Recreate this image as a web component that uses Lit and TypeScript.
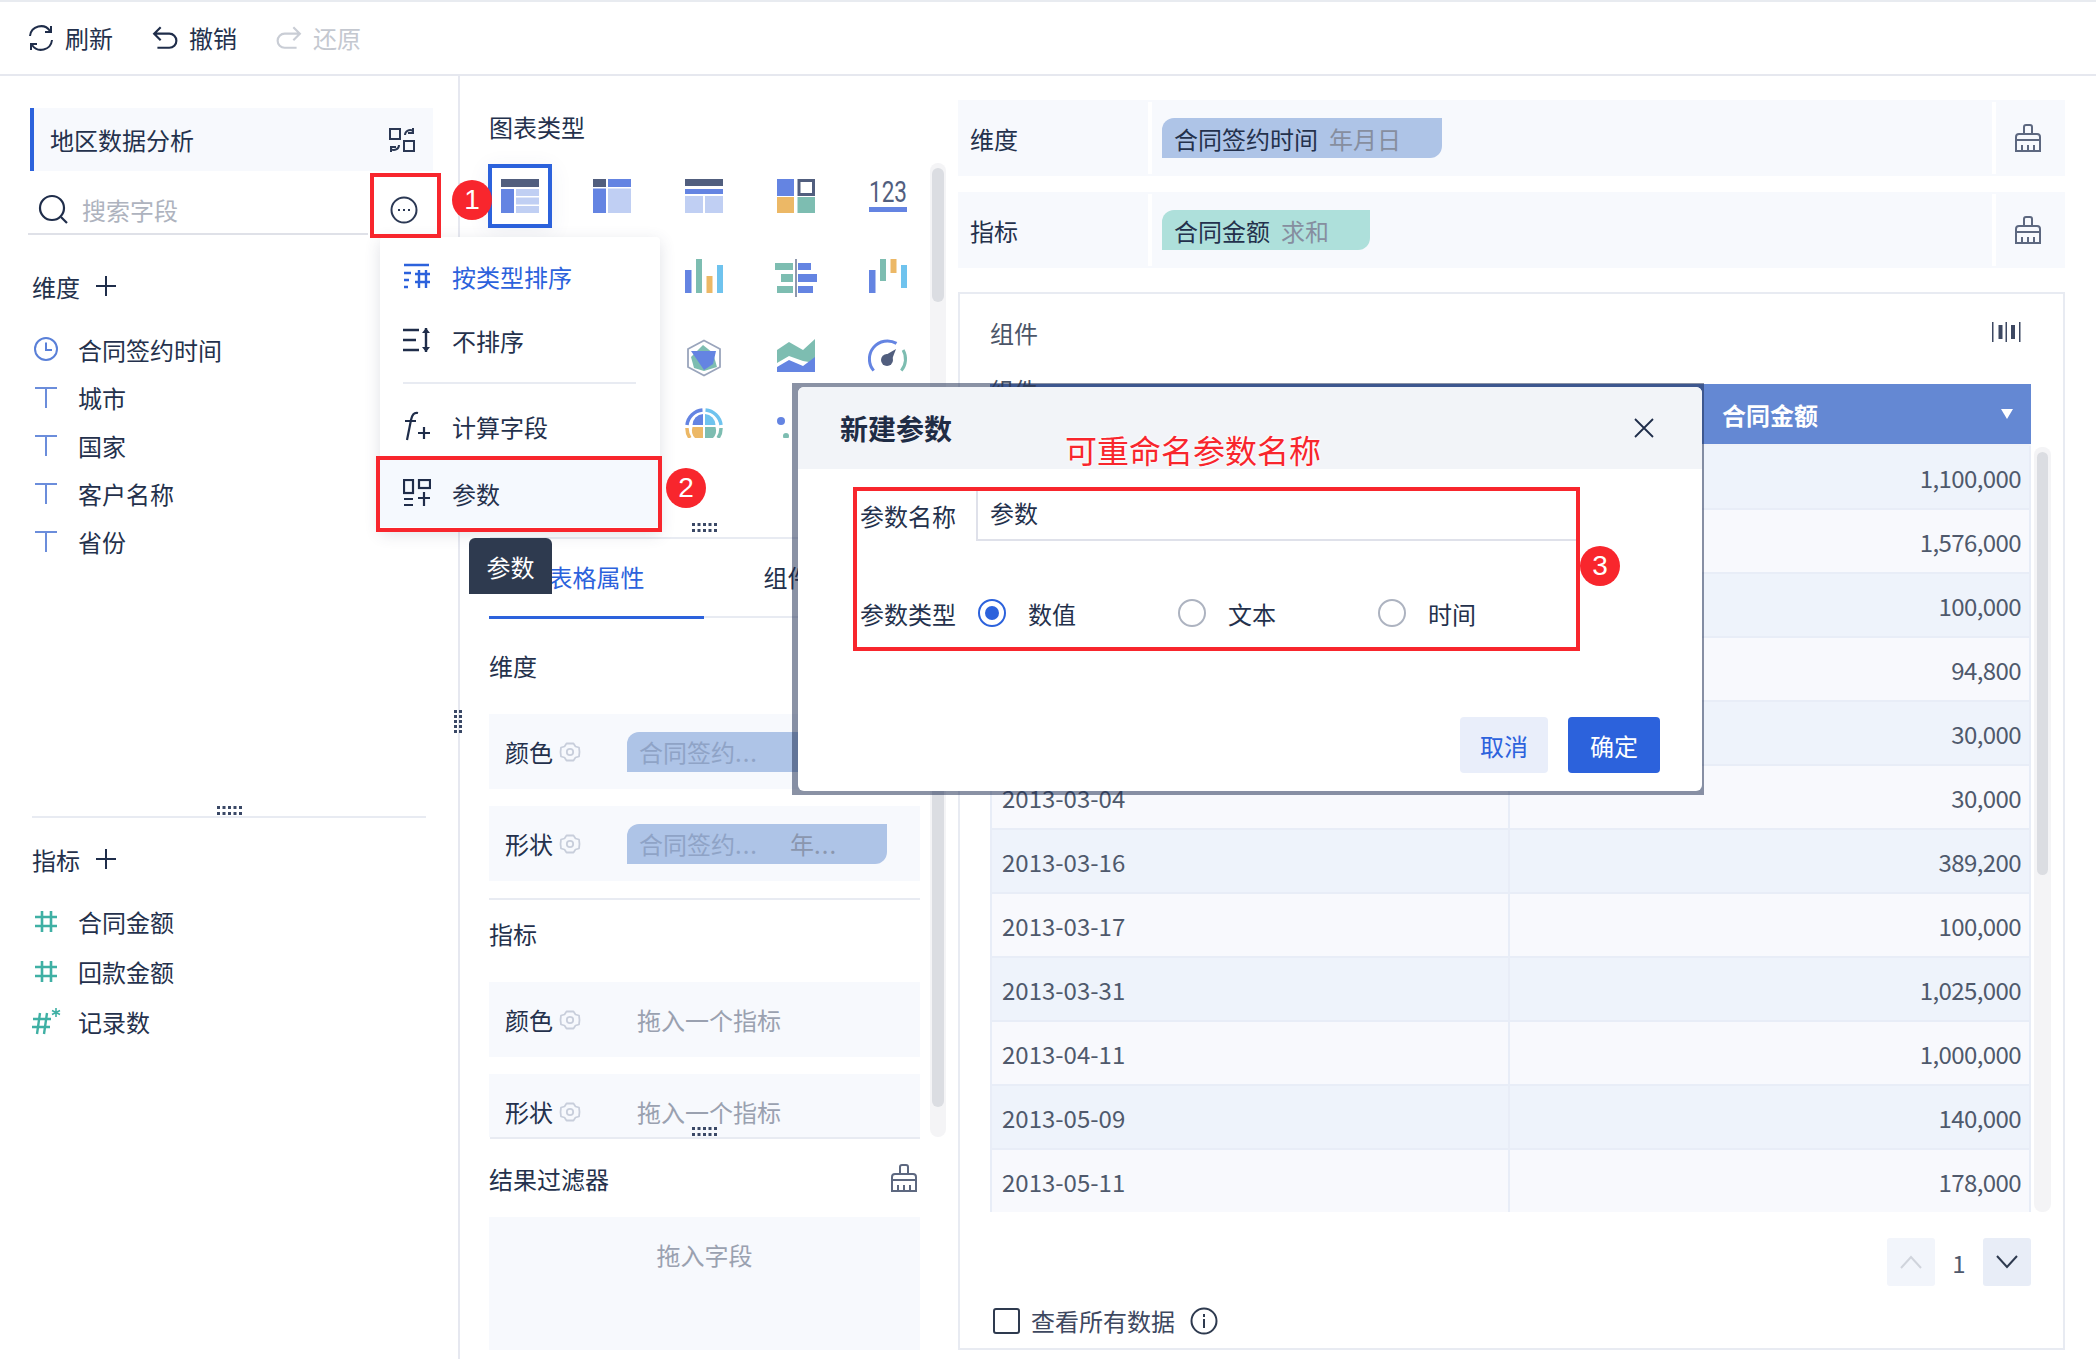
import { LitElement, html, css } from "lit";
import { customElement } from "lit/decorators.js";

const dark = "#515e7e", blue = "#6484e2", light = "#c0cff3", teal = "#7dbdb1", orange = "#ecb866", sky = "#6fc3ee";

const dotsH = html`<svg class="dots-h" width="26" height="10" viewBox="0 0 26 10" fill="#3a4866">
  <path d="M0 0h3v3H0zM5.500 0h3v3h-3zM11 0h3v3h-3zM16.500 0h3v3h-3zM22 0h3v3h-3zM0 6h3v3H0zM5.500 6h3v3h-3zM11 6h3v3h-3zM16.500 6h3v3h-3zM22 6h3v3h-3z"/>
</svg>`;

const brush = html`<svg class="brush" width="30" height="30" viewBox="0 0 30 30" fill="none" stroke="#5d6880" stroke-width="2">
  <path d="M11 11V4a2 2 0 0 1 2-2h4a2 2 0 0 1 2 2v7M3 17v-3a3 3 0 0 1 3-3h18a3 3 0 0 1 3 3v3M3 17h24M3 17v11h24V17M9 22v6M15 22v6M21 22v6"/>
</svg>`;

const gear = html`<svg class="gear" width="22" height="22" viewBox="0 0 22 22" fill="none" stroke="#c8cedb" stroke-width="1.800">
  <path d="M7.500 2.500h7l2 3 3.500 1 .5 4.500-.5 4.500-3.500 1-2 3h-7l-2-3-3.500-1L1.500 11 2 6.500l3.500-1z" stroke-linejoin="round"/><circle cx="11" cy="11" r="3.200"/>
</svg>`;

const tIcon = html`<svg width="24" height="24" viewBox="0 0 24 24" fill="none" stroke="#6b8ddb" stroke-width="2"><path d="M1 3h22M12 3v20"/></svg>`;
const clock = html`<svg class="shift" width="26" height="26" viewBox="0 0 26 26" fill="none" stroke="#5a80d8" stroke-width="2"><circle cx="13" cy="13" r="11"/><path d="M13 6.500V14h6"/></svg>`;
const hash = html`<svg width="24" height="24" viewBox="0 0 24 24" fill="none" stroke="#3fb0a4" stroke-width="2.600"><path d="M1 8h22M1 17h22M8 2v21M17 2v21"/></svg>`;
const hashStar = html`<svg class="shift2" width="30" height="28" viewBox="0 0 30 28" fill="none" stroke="#3fb0a4" stroke-width="2.400"><path d="M1 12h18M0 20h18M8 6 5 27M15 6l-3 21"/><path d="M24 1v9M20 3.500l8 4M28 3.500l-8 4" stroke-width="1.600"/></svg>`;

const icons = {
  t1: html`<svg width="38" height="34" viewBox="0 0 38 34"><rect width="38" height="8" fill="${dark}"/><rect y="10" width="13" height="24" fill="${blue}"/><rect x="15" y="10" width="23" height="7" fill="${light}"/><rect x="15" y="18.500" width="23" height="7" fill="${light}"/><rect x="15" y="27" width="23" height="7" fill="${light}"/></svg>`,
  t2: html`<svg width="38" height="34" viewBox="0 0 38 34"><rect width="13" height="8" fill="${dark}"/><rect x="15" width="23" height="8" fill="${blue}"/><rect y="9.500" width="13" height="24.500" fill="${blue}"/><rect x="15" y="9.500" width="23" height="24.500" fill="${light}"/></svg>`,
  t3: html`<svg width="38" height="34" viewBox="0 0 38 34"><rect width="38" height="7" fill="${dark}"/><rect y="10" width="38" height="5" fill="${blue}"/><rect y="17" width="18" height="17" fill="${light}"/><rect x="20" y="17" width="18" height="17" fill="${light}"/></svg>`,
  t4: html`<svg width="38" height="34" viewBox="0 0 38 34"><rect width="17" height="17" fill="${blue}"/><rect x="22" y="1.500" width="14.500" height="14" fill="none" stroke="${dark}" stroke-width="3"/><rect y="18" width="17" height="16" fill="${orange}"/><rect x="20.500" y="18" width="17.500" height="16" fill="${teal}"/></svg>`,
  t5: html`<svg width="38" height="34" viewBox="0 0 38 34"><text class="num" x="0" y="23" textLength="38" lengthAdjust="spacingAndGlyphs" fill="${dark}">123</text><rect y="28" width="38" height="5" fill="${blue}"/></svg>`,
  bar: html`<svg width="38" height="34" viewBox="0 0 38 34"><rect y="11" width="6.500" height="23" fill="${blue}"/><rect x="11" width="6" height="34" fill="${teal}"/><rect x="21.500" y="17" width="6" height="17" fill="${orange}"/><rect x="32" y="6" width="6" height="28" fill="${sky}"/></svg>`,
  comp: html`<svg width="42" height="38" viewBox="0 0 42 38"><rect y="4" width="18" height="7" fill="${teal}"/><rect x="6" y="15" width="12" height="8" fill="${teal}"/><rect x="2" y="27" width="16" height="7" fill="${teal}"/><rect x="20" width="2" height="38" fill="#8e98ad"/><rect x="23" y="4" width="13" height="7" fill="${blue}"/><rect x="23" y="15" width="19" height="8" fill="${blue}"/><rect x="23" y="27" width="15" height="7" fill="${blue}"/></svg>`,
  water: html`<svg width="38" height="34" viewBox="0 0 38 34"><rect y="11" width="6.500" height="23" fill="${blue}"/><rect x="11" width="6" height="22" fill="${teal}"/><rect x="21.500" width="6" height="14" fill="${orange}"/><rect x="32" y="6" width="6" height="23" fill="${sky}"/></svg>`,
  radar: html`<svg width="34" height="38" viewBox="0 0 34 38"><path d="M17 1.500 33 10v18l-16 8.500L1 28V10z" fill="none" stroke="#9aa5bc" stroke-width="1.800"/><path d="M16 6l10 8 4 14-13 4-10-3-3-11z" fill="${teal}"/><path d="M4 12l25 0-3 13-9 6z" fill="${blue}"/></svg>`,
  area: html`<svg width="38" height="33" viewBox="0 0 38 33"><path d="M0 11 12 3l14 8L38 0v24L26 22 12 17 0 24z" fill="${teal}"/><path d="M0 28l12-7 14 6 12-9v15H0z" fill="${blue}"/></svg>`,
  gauge: html`<svg width="40" height="36" viewBox="0 0 40 36" fill="none"><path d="M5.700 31.600A18 18 0 0 1 28.500 4.400" stroke="${blue}" stroke-width="3"/><path d="M35.100 11A18 18 0 0 1 33.300 31.600" stroke="${teal}" stroke-width="3"/><path d="M16 17 28 10 23 23z" fill="${dark}"/><circle cx="19" cy="21" r="6" fill="${dark}"/></svg>`,
  pie: html`<svg width="38" height="30" viewBox="0 0 38 30" fill="none"><path d="M2 17A17 17 0 0 1 17.500 2" stroke="${blue}" stroke-width="3.500"/><path d="M20.500 2A17 17 0 0 1 36 17" stroke="${sky}" stroke-width="3.500"/><path d="M2 20a17 17 0 0 0 3 10" stroke="${orange}" stroke-width="3.500"/><path d="M36 20a17 17 0 0 1-3 10" stroke="${teal}" stroke-width="3.500"/><path d="M18 6v11H7.500A11 11 0 0 1 18 6z" fill="${blue}"/><path d="M20 6a11 11 0 0 1 10.500 11H20z" fill="${sky}"/><path d="M7.500 19H18v11H10a11 11 0 0 1-2.500-11z" fill="${orange}"/><path d="M20 19h10.500A11 11 0 0 1 28 30h-8z" fill="${teal}"/></svg>`,
  scatter: html`<svg width="38" height="30" viewBox="0 0 38 30"><circle cx="4" cy="13" r="4" fill="${blue}"/><circle cx="9" cy="28" r="3" fill="${teal}"/></svg>`,
};

const chartCells = [
  icons.t1, icons.t2, icons.t3, icons.t4, icons.t5,
  null, null, icons.bar, icons.comp, icons.water,
  null, null, icons.radar, icons.area, icons.gauge,
  null, null, icons.pie, icons.scatter, null,
];

const amounts: [string, string][] = [
  ["", "1,100,000"], ["", "1,576,000"], ["", "100,000"], ["", "94,800"], ["", "30,000"],
  ["2013-03-04", "30,000"], ["2013-03-16", "389,200"], ["2013-03-17", "100,000"], ["2013-03-31", "1,025,000"],
  ["2013-04-11", "1,000,000"], ["2013-05-09", "140,000"], ["2013-05-11", "178,000"],
];

const dimFields: [unknown, string][] = [[clock, "合同签约时间"], [tIcon, "城市"], [tIcon, "国家"], [tIcon, "客户名称"], [tIcon, "省份"]];
const metFields: [unknown, string][] = [[hash, "合同金额"], [hash, "回款金额"], [hashStar, "记录数"]];

@customElement("app-root")
export class AppRoot extends LitElement {
  static styles = css`
    :host { display: block; font-family: "Noto Sans CJK SC", "Noto Sans", sans-serif; font-size: 24px; color: #24314c; }
    * { box-sizing: border-box; }
    svg { display: block; flex: none; }
    .num { font: 29px Roboto, sans-serif; }
    .root { position: relative; width: 2096px; height: 1359px; overflow: hidden; background: #fff; display: flex; flex-direction: column; }

    .top { height: 76px; flex: none; border-top: 2px solid #e8ebf0; border-bottom: 2px solid #e6e8ef; display: flex; align-items: center; padding-left: 28px; gap: 39px; }
    .tool { display: flex; align-items: center; gap: 11px; line-height: 32px; }
    .tool.off { color: #c4c8d0; }

    .main { flex: 1; display: flex; min-height: 0; }
    .left { position: relative; width: 460px; flex: none; border-right: 2px solid #e6e8f0; padding-top: 32px; }
    .vdots { position: absolute; right: -4px; top: 634px; }
    .title { margin-left: 30px; width: 403px; height: 63px; background: #f7f9fd; border-left: 4px solid #2c62dc; display: flex; align-items: center; justify-content: space-between; padding: 0 18px 0 16px; }
    .search { margin-left: 28px; height: 64px; display: flex; align-items: center; }
    .search-in { width: 340px; height: 64px; border-bottom: 2px solid #dfe1e8; display: flex; align-items: center; gap: 14px; padding: 14px 0 0 10px; color: #aeb3be; }
    .more { margin: 14px 0 0 22px; }
    .head { margin-left: 32px; height: 48px; display: flex; align-items: center; gap: 16px; }
    .head.dim { margin-top: 27px; }
    .fields { margin-top: 15px; }
    .fields.m { margin-top: 13px; }
    .field { height: 48px; display: flex; align-items: center; padding-left: 34px; }
    .fields.m .field { height: 50px; }
    .ficon-box { width: 44px; display: flex; }
    .shift { margin-left: -1px; }
    .shift2 { margin-left: -2px; }
    .split { position: relative; margin: 251px 0 0 32px; width: 394px; height: 2px; background: #e8ebf2; }
    .split svg { position: absolute; left: 185px; top: -10px; }
    .head.met { margin-top: 17px; }

    .mid { position: relative; width: 498px; flex: none; }
    .mid-top { height: 461px; display: flex; padding-left: 29px; }
    .mid-main { width: 431px; flex: none; }
    .h-types { padding-top: 35px; line-height: 32px; }
    .grid { margin: 21px 0 0 -1px; display: grid; grid-template-columns: repeat(5, 64px); grid-auto-rows: 64px; gap: 16px 28px; }
    .cell { display: flex; justify-content: center; align-items: flex-start; padding-top: 15px; }
    .cell.sel { border: 4px solid #2c62dc; padding-top: 11px; box-shadow: 0 4px 20px rgba(60, 80, 130, 0.08); }
    .cell.short { height: 49px; overflow: hidden; padding-top: 4px; }
    .track { width: 16px; margin-left: 10px; background: #f4f4f6; border-radius: 8px; padding: 5px 2px; }
    .thumb { width: 12px; background: #dbdde2; border-radius: 6px; }
    .track.a { margin-top: 87px; height: 360px; }
    .track.a .thumb { height: 134px; }
    .mid-rule { margin-left: 30px; width: 430px; height: 2px; background: #e8ebf2; }
    .hdots { position: absolute; left: 692px; }
    .hd1 { top: 523px; }
    .hd2 { top: 1127px; }
    .mid-bot { height: 598px; display: flex; padding-left: 29px; overflow: hidden; }
    .tabs { display: flex; height: 79px; border-bottom: 2px solid #e8ebf2; }
    .tab { position: relative; width: 215px; text-align: center; padding-top: 21px; line-height: 34px; }
    .tab.on { color: #2c62dc; border-bottom: 3px solid #2c62dc; height: 80px; }
    .sec { height: 40px; line-height: 38px; margin-top: 29px; }
    .sec.b { margin-top: 15px; }
    .drop { margin-top: 27px; height: 75px; background: #f7f9fd; display: flex; align-items: center; padding-left: 16px; }
    .drop + .drop { margin-top: 17px; }
    .drop .lab { width: 48px; }
    .drop .gear { margin: 0 46px 0 6px; }
    .chip { position: relative; height: 40px; width: 260px; background: #aec4e7; border-radius: 12px 0 12px 0; display: flex; align-items: center; padding-left: 12px; color: #8fa3c6; overflow: hidden; white-space: nowrap; }
    .chip i { font-style: normal; letter-spacing: 1px; }
    .chip .s2 { margin-left: 32px; color: #8a96ae; }
    .ph { color: #9aa1b0; padding-left: 10px; }
    .rule { margin-top: 17px; height: 2px; background: #e8ebf2; }
    .track.b { margin-top: 8px; height: 590px; }
    .track.b .thumb { height: 555px; }
    .filter { margin: 19px 0 0 29px; width: 431px; }
    .filter-h { height: 40px; display: flex; align-items: center; justify-content: space-between; padding-right: 1px; }
    .filter-box { margin-top: 19px; height: 133px; background: #f7f9fd; text-align: center; color: #9aa1b0; padding-top: 20px; line-height: 36px; }

    .right { width: 1107px; flex: none; padding-top: 24px; }
    .well { height: 76px; background: #f7f9fd; display: flex; align-items: stretch; margin-bottom: 16px; padding: 2px 0; }
    .well-l { width: 194px; border-right: 4px solid #fff; padding-left: 12px; display: flex; align-items: center; }
    .well-c { flex: 1; padding-left: 10px; display: flex; align-items: center; }
    .well-r { width: 73px; border-left: 4px solid #fff; display: flex; align-items: center; justify-content: center; padding-right: 6px; }
    .pill { height: 40px; display: flex; align-items: center; padding-left: 12px; border-radius: 12px 0 12px 0; }
    .pill.d { width: 280px; background: #aec4e7; }
    .pill.m { width: 208px; background: #aee0db; }
    .pill em { font-style: normal; color: #868e9f; margin-left: 11px; }
    .panel { margin-top: 24px; height: 1058px; border: 2px solid #e8ebf2; padding: 18px 0 0 30px; position: relative; }
    .panel-h { height: 40px; display: flex; align-items: center; justify-content: space-between; padding-right: 42px; color: #4b5568; }
    .peek { position: absolute; left: 30px; top: 82px; line-height: 28px; color: #4b5568; }
    .tbl-wrap { margin-top: 32px; display: flex; gap: 3px; height: 828px; }
    .tbl { width: 1041px; flex: none; height: 828px; overflow: hidden; color: #4f596c; }
    .thead { height: 62px; border-bottom: 2px solid #eef1f8; display: grid; grid-template-columns: 518px 1fr; }
    .thead div { background: #6488d3; color: #fff; font-weight: 700; display: flex; align-items: center; justify-content: space-between; padding: 0 18px 0 214px; height: 60px; }
    .tri { width: 0; height: 0; border-left: 6px solid transparent; border-right: 6px solid transparent; border-top: 10px solid #fff; }
    .tr { height: 64px; display: grid; grid-template-columns: 516px 1fr; align-items: stretch; border-left: 2px solid #e8edf7; border-right: 2px solid #e8edf7; border-bottom: 2px solid #e8edf7; background: #f8f9fd; }
    .tr.odd { background: #eef3fb; }
    .td { display: flex; align-items: center; padding-left: 10px; }
    .td + .td { justify-content: flex-end; padding: 0 8px 0 0; border-left: 2px solid #e8edf7; letter-spacing: -0.6px; }
    .track.c { width: 17px; margin: 0; height: 765px; margin-top: 63px; padding: 5px 3px; border-radius: 8px; }
    .track.c .thumb { width: 11px; height: 423px; }
    .pager { margin-top: 26px; width: 1041px; display: flex; justify-content: flex-end; align-items: center; }
    .pg { width: 48px; height: 48px; border-radius: 3px; display: flex; align-items: center; justify-content: center; background: #f2f5fb; }
    .pg.on { background: #e8edf7; }
    .pgn { width: 48px; text-align: center; color: #4f596c; }
    .all { margin-top: 21px; display: flex; align-items: center; height: 27px; margin-left: 3px; color: #3e4860; }
    .box { width: 27px; height: 26px; border: 2px solid #2e3a4f; border-radius: 3px; margin-right: 11px; }
    .all svg { margin-left: 15px; }

    .menu { position: absolute; left: 380px; top: 237px; width: 280px; height: 293px; background: #fff; border-radius: 4px; box-shadow: 0 4px 16px rgba(60, 70, 100, 0.16); padding-top: 7px; }
    .mi { height: 64px; display: flex; align-items: center; padding-left: 23px; gap: 21px; }
    .mi.cur { color: #2c62dc; }
    .mi.hl { background: #f5f9fe; height: 68px; margin-top: 1px; }
    .msep { margin: 10px 24px 10px 23px; height: 2px; background: #e8ebf2; }
    .tip { position: absolute; left: 469px; top: 538px; width: 83px; height: 56px; background: #2e3a4f; color: #fff; border-radius: 6px 6px 0 0; display: flex; align-items: center; justify-content: center; }
    .red { position: absolute; border: 4px solid #f8262d; pointer-events: none; }
    .r1 { left: 370px; top: 173px; width: 71px; height: 65px; }
    .r2 { left: 376px; top: 456px; width: 286px; height: 76px; }
    .r3 { left: 853px; top: 487px; width: 727px; height: 164px; }
    .badge { position: absolute; width: 40px; height: 40px; border-radius: 50%; background: #f8262d; color: #fff; display: flex; align-items: center; justify-content: center; font: 28px "Liberation Sans", sans-serif; }
    .b1 { left: 452px; top: 180px; }
    .b2 { left: 666px; top: 468px; }
    .b3 { left: 1580px; top: 546px; }

    .mask { position: absolute; left: 792px; top: 383px; width: 912px; height: 412px; padding: 4px 2px 4px 6px; background: rgba(21, 37, 75, 0.5); }
    .dlg { position: relative; height: 100%; background: #fff; border-radius: 6px; overflow: hidden; }
    .dlg-h { height: 82px; background: #f2f4f8; display: flex; align-items: center; justify-content: space-between; padding: 0 48px 0 42px; font-size: 28px; font-weight: 700; color: #1f2c45; }
    .note { position: absolute; left: 267px; top: 40px; font-size: 32px; line-height: 44px; color: #f8262d; text-shadow: 0 0 3px #fff, 0 0 3px #fff; white-space: nowrap; }
    .frow { margin: 21px 0 0 62px; height: 51px; display: flex; }
    .flab { width: 116px; display: flex; align-items: center; }
    .input { width: 600px; border-left: 2px solid #dfe1ea; border-bottom: 2px solid #dfe1ea; padding: 0 0 4px 12px; display: flex; align-items: center; }
    .frow.t { margin-top: 49px; height: 46px; }
    .opt { width: 200px; padding-left: 2px; display: flex; align-items: center; gap: 22px; }
    .radio { width: 28px; height: 28px; border-radius: 50%; border: 2px solid #adb3c0; flex: none; }
    .radio.on { border-color: #2c62dc; display: flex; align-items: center; justify-content: center; }
    .radio.on i { width: 14px; height: 14px; border-radius: 50%; background: #2c62dc; }
    .foot { margin-top: 81px; padding-right: 42px; display: flex; justify-content: flex-end; gap: 20px; }
    .btn { height: 56px; border-radius: 4px; display: flex; align-items: center; justify-content: center; }
    .btn.c { width: 88px; background: #e9eefa; color: #2d62dd; }
    .btn.k { width: 92px; background: #2c62dc; color: #fff; }
  `;

  private dropRow(label: string, body: unknown) {
    return html`<div class="drop"><span class="lab">${label}</span>${gear}${body}</div>`;
  }

  private fieldRow([icon, label]: [unknown, string]) {
    return html`<div class="field"><span class="ficon-box">${icon}</span>${label}</div>`;
  }

  render() {
    return html`<div class="root">
      <div class="top">
        <div class="tool">
          <svg width="26" height="28" viewBox="0 0 26 28" fill="none" stroke="#1f2d4a" stroke-width="2"><path d="M2 12A11 11 0 0 1 22 7M24 16A11 11 0 0 1 4 21"/><path d="M23 2v6h-6M3 26v-6h6"/></svg>
          <span>刷新</span>
        </div>
        <div class="tool">
          <svg width="26" height="26" viewBox="0 0 24 24" fill="none" stroke="#1f2d4a" stroke-width="2"><path d="M8 2 2 8l6 6M2 8h14a6.500 6.500 0 0 1 0 13H5"/></svg>
          <span>撤销</span>
        </div>
        <div class="tool off">
          <svg width="26" height="26" viewBox="0 0 24 24" fill="none" stroke="#c9cdd5" stroke-width="2"><path d="M16 2l6 6-6 6M22 8H8a6.500 6.500 0 0 0 0 13h11"/></svg>
          <span>还原</span>
        </div>
      </div>

      <div class="main">
        <div class="left">
          <svg class="vdots" width="8" height="24" viewBox="0 0 8 24" fill="#3a4866"><path d="M0 0h3v3H0zM5 0h3v3H5zM0 5h3v3H0zM5 5h3v3H5zM0 10h3v3H0zM5 10h3v3H5zM0 15h3v3H0zM5 15h3v3H5zM0 20h3v3H0zM5 20h3v3H5z"/></svg>
          <div class="title">
            <span>地区数据分析</span>
            <svg width="26" height="26" viewBox="0 0 26 26" fill="none" stroke="#2b3854" stroke-width="2"><rect x="1" y="2" width="10" height="10"/><rect x="15" y="14" width="10" height="10"/><path d="M16 8a5 5 0 0 1 8-4M24 1v5h-5M10 18a5 5 0 0 1-8 4M2 25v-5h5"/></svg>
          </div>
          <div class="search">
            <div class="search-in">
              <svg width="30" height="30" viewBox="0 0 30 30" fill="none" stroke="#1f2d4a" stroke-width="2.200"><circle cx="14" cy="14" r="12"/><path d="M23 23l6 6"/></svg>
              <span>搜索字段</span>
            </div>
            <svg class="more" width="28" height="28" viewBox="0 0 28 28" fill="none" stroke="#2b3854" stroke-width="2"><circle cx="14" cy="14" r="12.500"/><path d="M8 14h2M13 14h2M18 14h2"/></svg>
          </div>
          <div class="head dim"><span>维度</span><svg width="20" height="20" viewBox="0 0 20 20" stroke="#1f2d4a" stroke-width="2"><path d="M0 10h20M10 0v20"/></svg></div>
          <div class="fields">${dimFields.map((f) => this.fieldRow(f))}</div>
          <div class="split">${dotsH}</div>
          <div class="head met"><span>指标</span><svg width="20" height="20" viewBox="0 0 20 20" stroke="#1f2d4a" stroke-width="2"><path d="M0 10h20M10 0v20"/></svg></div>
          <div class="fields m">${metFields.map((f) => this.fieldRow(f))}</div>
        </div>

        <div class="mid">
          <div class="mid-top">
            <div class="mid-main">
              <div class="h-types">图表类型</div>
              <div class="grid">
                ${chartCells.map((c, i) => html`<div class="cell ${i === 0 ? "sel" : ""} ${i >= 15 ? "short" : ""}">${c}</div>`)}
              </div>
            </div>
            <div class="track a"><div class="thumb"></div></div>
          </div>
          <div class="mid-rule"></div>
          <div class="mid-bot">
            <div class="mid-main">
              <div class="tabs"><div class="tab on">表格属性</div><div class="tab">组件样式</div></div>
              <div class="sec">维度</div>
              ${this.dropRow("颜色", html`<div class="chip">合同签约<i>...</i></div>`)}
              ${this.dropRow("形状", html`<div class="chip">合同签约<i>...</i><span class="s2">年<i>...</i></span></div>`)}
              <div class="rule"></div>
              <div class="sec b">指标</div>
              ${this.dropRow("颜色", html`<span class="ph">拖入一个指标</span>`)}
              ${this.dropRow("形状", html`<span class="ph">拖入一个指标</span>`)}
            </div>
            <div class="track b"><div class="thumb"></div></div>
          </div>
          <div class="mid-rule"></div>
          <div class="filter">
            <div class="filter-h"><span>结果过滤器</span>${brush}</div>
            <div class="filter-box">拖入字段</div>
          </div>
        </div>

        <div class="right">
          <div class="well">
            <div class="well-l">维度</div>
            <div class="well-c"><div class="pill d">合同签约时间<em>年月日</em></div></div>
            <div class="well-r">${brush}</div>
          </div>
          <div class="well">
            <div class="well-l">指标</div>
            <div class="well-c"><div class="pill m">合同金额<em>求和</em></div></div>
            <div class="well-r">${brush}</div>
          </div>
          <div class="panel">
            <div class="panel-h">
              <span>组件</span>
              <svg width="29" height="20" viewBox="0 0 29 20" fill="#3d4862"><rect width="1.500" height="20"/><rect x="6.500" y="3" width="4" height="14"/><rect x="13.500" width="1.500" height="20"/><rect x="19" y="3" width="4" height="14"/><rect x="27" width="1.500" height="20"/></svg>
            </div>
            <div class="peek">组件</div>
            <div class="tbl-wrap">
              <div class="tbl">
                <div class="thead"><div></div><div>合同金额<span class="tri"></span></div></div>
                ${amounts.map(([d, a], i) => html`<div class="tr ${i % 2 === 0 ? "odd" : ""}"><div class="td">${d}</div><div class="td">${a}</div></div>`)}
              </div>
              <div class="track c"><div class="thumb"></div></div>
            </div>
            <div class="pager">
              <div class="pg"><svg width="22" height="14" viewBox="0 0 22 14" fill="none" stroke="#d0d4dc" stroke-width="2"><path d="M1 13 11 2l10 11"/></svg></div>
              <span class="pgn">1</span>
              <div class="pg on"><svg width="22" height="14" viewBox="0 0 22 14" fill="none" stroke="#2e3a4f" stroke-width="2"><path d="M1 1l10 11L21 1"/></svg></div>
            </div>
            <div class="all">
              <span class="box"></span><span>查看所有数据</span>
              <svg width="28" height="28" viewBox="0 0 28 28" fill="none" stroke="#2e3a4f" stroke-width="2"><circle cx="14" cy="14" r="12.500"/><path d="M14 12v9M14 7v3"/></svg>
            </div>
          </div>
        </div>
      </div>

      <div class="menu">
        <div class="mi cur">
          <svg width="28" height="26" viewBox="0 0 28 26" fill="none" stroke="#2c62dc" stroke-width="2.400"><path d="M1 2h25M1 10h7M1 17h5M1 24h4M12 11h15M12 19h15M16 7v18M23 7v18"/></svg>
          <span>按类型排序</span>
        </div>
        <div class="mi">
          <svg width="28" height="26" viewBox="0 0 28 26" fill="none" stroke="#1f2d4a" stroke-width="2.400"><path d="M0 3h16M0 13h13M0 23h16M23 1v24"/><path d="M19 6l4-5 4 5zM19 20l4 5 4-5z" fill="#1f2d4a" stroke="none"/></svg>
          <span>不排序</span>
        </div>
        <div class="msep"></div>
        <div class="mi">
          <svg width="28" height="30" viewBox="0 0 28 30" fill="none" stroke="#1f2d4a" stroke-width="2.200"><path d="M15 2c-4-1-6 2-7 7L4 29M2 10h11M15 22h12M21 16v12"/></svg>
          <span>计算字段</span>
        </div>
        <div class="mi hl">
          <svg width="28" height="28" viewBox="0 0 28 28" fill="none" stroke="#1f2d4a" stroke-width="2.200"><rect x="1" y="1" width="9" height="13"/><rect x="16" y="1" width="11" height="8"/><path d="M1 20h9M1 26h9M15 19h12M21 13v14"/></svg>
          <span>参数</span>
        </div>
      </div>
      <div class="tip">参数</div>

      <div class="mask">
        <div class="dlg">
          <div class="dlg-h">
            <span>新建参数</span>
            <svg width="20" height="20" viewBox="0 0 20 20" stroke="#1f2d4a" stroke-width="1.800"><path d="M1 1l18 18M19 1 1 19"/></svg>
          </div>
          <div class="note">可重命名参数名称</div>
          <div class="frow"><div class="flab">参数名称</div><div class="input">参数</div></div>
          <div class="frow t">
            <div class="flab">参数类型</div>
            <div class="opt"><span class="radio on"><i></i></span>数值</div>
            <div class="opt"><span class="radio"></span>文本</div>
            <div class="opt"><span class="radio"></span>时间</div>
          </div>
          <div class="foot"><div class="btn c">取消</div><div class="btn k">确定</div></div>
        </div>
      </div>

      <div class="red r1"></div>
      <div class="red r2"></div>
      <div class="red r3"></div>
      <div class="badge b1">1</div>
      <div class="badge b2">2</div>
      <div class="badge b3">3</div>
      <div class="hdots hd1">${dotsH}</div>
      <div class="hdots hd2">${dotsH}</div>
    </div>`;
  }
}
